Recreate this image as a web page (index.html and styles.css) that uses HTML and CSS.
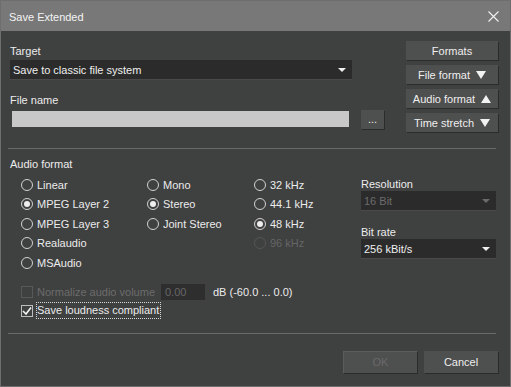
FILE: index.html
```html
<!DOCTYPE html>
<html lang="en">
<head>
  <meta charset="UTF-8">
  <title>Save Extended</title>
  <link rel="stylesheet" href="styles.css">
</head>
<body>
  <div class="dialog">
    <div class="titlebar">
      <span class="title">Save Extended</span>
      <svg class="close" width="11" height="11" viewBox="0 0 11 11">
        <path d="M0.5 0.5 L10.5 10.5 M10.5 0.5 L0.5 10.5" stroke="#f2f2f2" stroke-width="1.1" fill="none"/>
      </svg>
    </div>

    <div class="content">
      <div class="top">
        <div class="main">
          <div class="lbl">Target</div>
          <div class="select target">
            <span>Save to classic file system</span>
            <i class="caret"></i>
          </div>
          <div class="lbl gap-file">File name</div>
          <div class="file-row">
            <div class="textbox"></div>
            <button class="btn dots">...</button>
          </div>
        </div>
        <div class="side">
          <button class="btn side-btn">Formats</button>
          <button class="btn side-btn">File format
            <svg width="10" height="8" viewBox="0 0 10 8"><path d="M0 0 H10 L5 8 Z" fill="#f2f2f2"/></svg>
          </button>
          <button class="btn side-btn">Audio format
            <svg width="10" height="8" viewBox="0 0 10 8"><path d="M0 8 H10 L5 0 Z" fill="#f2f2f2"/></svg>
          </button>
          <button class="btn side-btn">Time stretch
            <svg width="10" height="8" viewBox="0 0 10 8"><path d="M0 0 H10 L5 8 Z" fill="#f2f2f2"/></svg>
          </button>
        </div>
      </div>

      <div class="sep sep-top"></div>

      <div class="lbl audio-lbl">Audio format</div>
      <div class="audio-grid">
        <div class="col">
          <div class="radio"><i class="dot"></i>Linear</div>
          <div class="radio on"><i class="dot"></i>MPEG Layer 2</div>
          <div class="radio"><i class="dot"></i>MPEG Layer 3</div>
          <div class="radio"><i class="dot"></i>Realaudio</div>
          <div class="radio"><i class="dot"></i>MSAudio</div>
        </div>
        <div class="col">
          <div class="radio"><i class="dot"></i>Mono</div>
          <div class="radio on"><i class="dot"></i>Stereo</div>
          <div class="radio"><i class="dot"></i>Joint Stereo</div>
        </div>
        <div class="col">
          <div class="radio"><i class="dot"></i>32 kHz</div>
          <div class="radio"><i class="dot"></i>44.1 kHz</div>
          <div class="radio on"><i class="dot"></i>48 kHz</div>
          <div class="radio off"><i class="dot"></i>96 kHz</div>
        </div>
        <div class="params">
          <div class="lbl small">Resolution</div>
          <div class="select disabled">
            <span>16 Bit</span>
            <i class="caret"></i>
          </div>
          <div class="lbl small gap-rate">Bit rate</div>
          <div class="select">
            <span>256 kBit/s</span>
            <i class="caret"></i>
          </div>
        </div>
      </div>

      <div class="checks">
        <div class="check-row off">
          <i class="box"></i>
          <span>Normalize audio volume</span>
          <div class="numbox">0.00</div>
          <span class="range">dB (-60.0 ... 0.0)</span>
        </div>
        <div class="check-row">
          <i class="box checked">
            <svg width="10" height="10" viewBox="0 0 10 10"><path d="M1 5 L4 8 L9 1.5" stroke="#f4f4f4" stroke-width="1.6" fill="none"/></svg>
          </i>
          <span class="focus">Save loudness compliant</span>
        </div>
      </div>

      <div class="sep sep-bottom"></div>

      <div class="footer">
        <button class="btn foot-btn disabled">OK</button>
        <button class="btn foot-btn">Cancel</button>
      </div>
    </div>
  </div>
</body>
</html>
```

FILE: styles.css
```css
html, body {
  margin: 0;
  padding: 0;
}
body {
  width: 511px;
  height: 387px;
  background-color: #3f4040;
  font-family: "Liberation Sans", Arial, sans-serif;
  font-size: 11px;
  color: #ececec;
}
.dialog {
  box-sizing: border-box;
  width: 511px;
  height: 387px;
  border: 1px solid #6e6e6e;
  background-color: #3f4040;
}
.titlebar {
  height: 30px;
  background-color: #787878;
  display: flex;
  align-items: center;
  justify-content: space-between;
  padding: 0 11px 0 8px;
}
.title {
  color: #f4f4f4;
  font-size: 11px;
  padding-top: 1px;
}
.content {
  padding: 10px 12px 0 9px;
}
.top {
  display: flex;
  justify-content: space-between;
}
.main {
  margin-top: 3px;
  width: 374px;
}
.lbl {
  line-height: 15px;
  height: 15px;
  margin-bottom: 1px;
}
.gap-file {
  margin-top: 13px;
}
.select {
  position: relative;
  box-sizing: border-box;
  height: 20px;
  background-color: #2b2b2b;
  border-bottom: 1px solid #4a4a4a;
  padding: 1px 0 0 3px;
  line-height: 18px;
  color: #efefef;
}
.select.target {
  width: 342px;
}
.select.disabled {
  color: #6c6c6c;
}
.caret {
  position: absolute;
  right: 6px;
  top: 8px;
  width: 0;
  height: 0;
  border-left: 4px solid transparent;
  border-right: 4px solid transparent;
  border-top: 4px solid #f0f0f0;
}
.select.disabled .caret {
  border-top-color: #6a6a6a;
}
.file-row {
  display: flex;
  align-items: center;
  height: 20px;
}
.textbox {
  width: 337px;
  height: 16px;
  margin-left: 2px;
  background-color: #c8c8c8;
}
.btn {
  font-family: inherit;
  font-size: 11px;
  color: #eeeeee;
  background-color: #4e4f4f;
  border: none;
  box-shadow: 1px 1px 0 #2b2b2b;
  padding: 0;
  cursor: pointer;
}
.dots {
  width: 23px;
  height: 19px;
  margin-left: 12px;
  line-height: 12px;
}
.side {
  display: flex;
  flex-direction: column;
  gap: 5px;
}
.side-btn {
  width: 92px;
  height: 19px;
  display: flex;
  align-items: center;
  justify-content: center;
  gap: 6px;
}
.sep {
  height: 1px;
  background-color: #6a6a6a;
  margin-left: -2px;
  margin-right: 2px;
}
.sep-top {
  margin-top: 16px;
}
.audio-lbl {
  margin-top: 8px;
  margin-bottom: 0;
}
.audio-grid {
  display: grid;
  grid-template-columns: 126px 107px 107px 135px;
  padding-left: 11px;
  margin-top: 3px;
}
.radio {
  display: flex;
  align-items: center;
  height: 19.5px;
  gap: 4px;
}
.dot {
  box-sizing: border-box;
  width: 12px;
  height: 12px;
  border: 1px solid #d2d2d2;
  border-radius: 50%;
  display: flex;
  align-items: center;
  justify-content: center;
}
.radio.on .dot::after {
  content: "";
  width: 6px;
  height: 6px;
  border-radius: 50%;
  background-color: #eeeeee;
}
.radio.off {
  color: #666666;
}
.radio.off .dot {
  border-color: #555555;
}
.params {
  margin-top: 2px;
}
.lbl.small {
  line-height: 14px;
  height: 14px;
  margin-bottom: 0;
}
.gap-rate {
  margin-top: 14px;
}
.checks {
  margin-top: 10px;
  padding-left: 11px;
  display: flex;
  flex-direction: column;
  gap: 1px;
}
.check-row {
  display: flex;
  align-items: center;
  height: 18px;
}
.box {
  box-sizing: border-box;
  width: 12px;
  height: 12px;
  border: 1px solid #bdbdbd;
  margin-right: 4px;
  display: flex;
  align-items: center;
  justify-content: center;
}
.check-row.off {
  color: #6c6c6c;
}
.check-row.off .box {
  border-color: #585858;
}
.numbox {
  box-sizing: border-box;
  width: 44px;
  height: 16px;
  margin-left: 6px;
  padding-left: 4px;
  line-height: 16px;
  background-color: #2e2e2e;
  color: #666666;
}
.range {
  margin-left: 8px;
  color: #ececec;
}
.focus {
  margin-left: -1px;
  padding: 0 1px 1px 0;
  line-height: 14px;
  border: 1px dotted #d8d8d8;
}
.sep-bottom {
  margin-top: 13px;
}
.footer {
  display: flex;
  justify-content: flex-end;
  gap: 7px;
  margin-top: 17px;
}
.foot-btn {
  width: 74px;
  height: 22px;
}
.foot-btn.disabled {
  color: #6a6a6a;
  border-top: 1px solid #5c5c5c;
  border-left: 1px solid #5c5c5c;
}
```
